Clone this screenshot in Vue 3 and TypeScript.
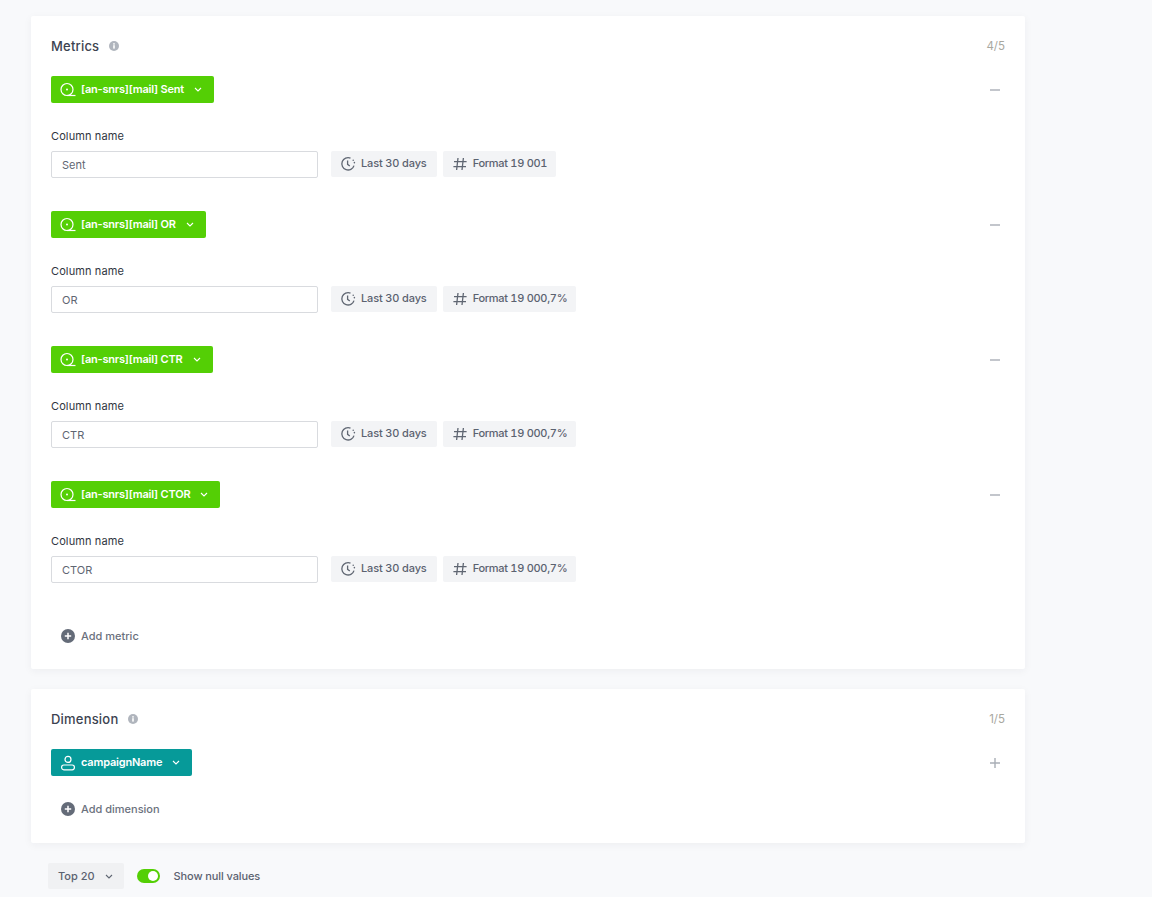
<script setup lang="ts">
interface Metric { title: string; name: string; format: string }
const metrics: Metric[] = [
  { title: '[an-snrs][mail] Sent', name: 'Sent', format: 'Format 19 001' },
  { title: '[an-snrs][mail] OR', name: 'OR', format: 'Format 19 000,7%' },
  { title: '[an-snrs][mail] CTR', name: 'CTR', format: 'Format 19 000,7%' },
  { title: '[an-snrs][mail] CTOR', name: 'CTOR', format: 'Format 19 000,7%' },
]
</script>

<template>
  <div class="page">
    <section class="card metrics-card">
      <header class="card-head">
        <h2 class="title">Metrics</h2>
        <svg class="info" viewBox="0 0 10 10"><circle cx="5" cy="5" r="5" fill="#b0b5bd" /><rect x="4.2" y="4.2" width="1.6" height="3.4" fill="#fff" /><rect x="4.2" y="2.2" width="1.6" height="1.4" fill="#fff" /></svg>
        <span class="count">4/5</span>
      </header>
      <div v-for="m in metrics" :key="m.title" class="metric">
        <div class="pill-row">
          <button class="pill green">
            <svg class="pill-icon" viewBox="0 0 16 16" fill="none" stroke="#fff" stroke-width="1.2"><circle cx="7" cy="7.5" r="6" /><circle cx="7" cy="7.5" r="1" fill="#fff" stroke="none" /><path d="M7 13.5h8.5" /></svg>
            <span>{{ m.title }}</span>
            <svg class="chev" viewBox="0 0 8 5" fill="none" stroke="#fff" stroke-width="1.1"><path d="M1 1l3 3 3-3" /></svg>
          </button>
          <svg class="side-icon" viewBox="0 0 10 10" stroke="#a9aeb6" stroke-width="1.4"><path d="M0 5h10" /></svg>
        </div>
        <label class="label">Column name</label>
        <div class="field-row">
          <div class="input">{{ m.name }}</div>
          <div class="chip">
            <svg class="chip-icon" viewBox="0 0 16 16" fill="none" stroke="#5f6672" stroke-width="1.3"><path d="M10.5 2.1A6.2 6.2 0 1 0 14 9.6" /><path d="M7.6 4.6v3.8l2.2 1.6" /><path d="M13.2 4.2v.1M14.4 6.6v.1" stroke-linecap="round" stroke-width="1.5" /></svg>
            <span>Last 30 days</span>
          </div>
          <div class="chip format">
            <svg class="chip-icon" viewBox="0 0 16 16" fill="none" stroke="#5f6672" stroke-width="1.3"><path d="M6 2L4.6 14M11.4 2L10 14M2 5.6h12.6M1.4 10.6h12.6" /></svg>
            <span>{{ m.format }}</span>
          </div>
        </div>
      </div>
      <button class="add add-metric">
        <svg class="add-icon" viewBox="0 0 14 14"><circle cx="7" cy="7" r="7" fill="#646b78" /><path d="M7 3.8v6.4M3.8 7h6.4" stroke="#fff" stroke-width="1.5" /></svg>
        <span>Add metric</span>
      </button>
    </section>

    <section class="card dim-card">
      <header class="card-head">
        <h2 class="title">Dimension</h2>
        <svg class="info" viewBox="0 0 10 10"><circle cx="5" cy="5" r="5" fill="#b0b5bd" /><rect x="4.2" y="4.2" width="1.6" height="3.4" fill="#fff" /><rect x="4.2" y="2.2" width="1.6" height="1.4" fill="#fff" /></svg>
        <span class="count">1/5</span>
      </header>
      <div class="pill-row">
        <button class="pill teal">
          <svg class="pill-icon" viewBox="0 0 16 16" fill="none" stroke="#fff" stroke-width="1.2"><circle cx="8" cy="4.4" r="3" /><rect x="1.6" y="10" width="12.8" height="4.8" rx="2.2" /></svg>
          <span>campaignName</span>
          <svg class="chev" viewBox="0 0 8 5" fill="none" stroke="#fff" stroke-width="1.1"><path d="M1 1l3 3 3-3" /></svg>
        </button>
        <svg class="side-icon" viewBox="0 0 10 10" stroke="#a9aeb6" stroke-width="1.4"><path d="M0 5h10M5 0v10" /></svg>
      </div>
      <button class="add add-dim">
        <svg class="add-icon" viewBox="0 0 14 14"><circle cx="7" cy="7" r="7" fill="#646b78" /><path d="M7 3.8v6.4M3.8 7h6.4" stroke="#fff" stroke-width="1.5" /></svg>
        <span>Add dimension</span>
      </button>
    </section>

    <footer class="footer">
      <button class="top">
        <span>Top 20</span>
        <svg class="chev" viewBox="0 0 8 5" fill="none" stroke="#5f6672" stroke-width="1.1"><path d="M1 1l3 3 3-3" /></svg>
      </button>
      <span class="toggle"><span class="knob"></span></span>
      <span class="toggle-label">Show null values</span>
    </footer>
  </div>
</template>

<style scoped>
.page {
  width: 1152px;
  height: 897px;
  overflow: hidden;
  box-sizing: border-box;
  padding: 16px 127px 0 31px;
  background: #f8f9fb;
  font-family: Inter, "Noto Sans", sans-serif;
  font-size: 11px;
  color: #4a505c;
}
.card {
  background: #fff;
  box-shadow: 0 2px 8px rgba(30, 40, 60, 0.05);
  border-radius: 2px;
  padding: 0 20px 0 20px;
  box-sizing: border-box;
}
.metrics-card { height: 653px; }
.dim-card { height: 154px; margin-top: 20px; }
.card-head {
  display: flex;
  align-items: center;
  height: 60px;
}
.title {
  margin: 0;
  font-size: 13px;
  font-weight: 500;
  letter-spacing: 0.2px;
  color: #3c4350;
}
.info { width: 10px; height: 10px; margin-left: 10px; }
.count { margin-left: auto; font-size: 11.5px; color: #a9a89f; }
.metric { height: 135px; }
.pill-row {
  display: flex;
  align-items: center;
  justify-content: space-between;
}
.pill {
  display: inline-flex;
  align-items: center;
  height: 27px;
  padding: 0 12px 2px 9px;
  border: 0;
  border-radius: 2px;
  color: #fff;
  font: 600 11px Inter, "Noto Sans", sans-serif;
  letter-spacing: -0.2px;
}
.green { background: #54cf05; }
.teal { background: #069a99; }
.pill-icon { width: 16px; height: 16px; margin-right: 5px; margin-top: 2px; }
.chev { width: 8px; height: 5px; margin-left: 10px; margin-top: 1px; }
.side-icon { width: 10px; height: 10px; margin-right: 5px; }
.label {
  display: block;
  margin-top: 26px;
  line-height: 14px;
  font-weight: 400;
  letter-spacing: 0.12px;
  color: #2f3541;
}
.field-row {
  display: flex;
  align-items: flex-start;
  margin-top: 8px;
}
.input {
  box-sizing: border-box;
  width: 267px;
  height: 27px;
  line-height: 26px;
  padding-left: 10px;
  border: 1px solid #d9dbdf;
  border-radius: 2px;
  color: #5f6672;
  margin-right: 13px;
}
.chip {
  display: flex;
  align-items: center;
  height: 26px;
  padding: 0 10px 2px 9px;
  box-sizing: border-box;
  margin-right: 6px;
  background: #f3f4f6;
  border-radius: 2px;
  font-weight: 500;
  font-feature-settings: "tnum";
  letter-spacing: -0.15px;
  color: #5b6270;
}
.format { letter-spacing: -0.3px; padding-right: 9px; }
.chip-icon { width: 16px; height: 16px; margin-right: 5px; margin-top: 2px; flex: none; }
.add {
  display: flex;
  align-items: center;
  padding: 0 0 0 10px;
  border: 0;
  background: none;
  font: 500 11px Inter, "Noto Sans", sans-serif;
  color: #6b717d;
}
.add-metric { margin-top: 13px; }
.add-dim { margin-top: 26px; }
.add-icon { width: 14px; height: 14px; margin-right: 6px; }
.footer {
  display: flex;
  align-items: center;
  margin-top: 20px;
  padding-left: 17px;
}
.top {
  display: flex;
  align-items: center;
  height: 26px;
  padding: 0 11px 0 10px;
  border: 0;
  border-radius: 2px;
  background: #f0f1f3;
  font: 500 11px Inter, "Noto Sans", sans-serif;
  color: #5b6270;
}
.toggle {
  position: relative;
  width: 23px;
  height: 14px;
  margin-left: 13px;
  border-radius: 7px;
  background: #54cf05;
}
.knob {
  position: absolute;
  top: 2px;
  right: 2px;
  width: 10px;
  height: 10px;
  border-radius: 50%;
  background: #fff;
}
.toggle-label { margin-left: 14px; font-weight: 500; letter-spacing: -0.1px; color: #5b6270; }
</style>
